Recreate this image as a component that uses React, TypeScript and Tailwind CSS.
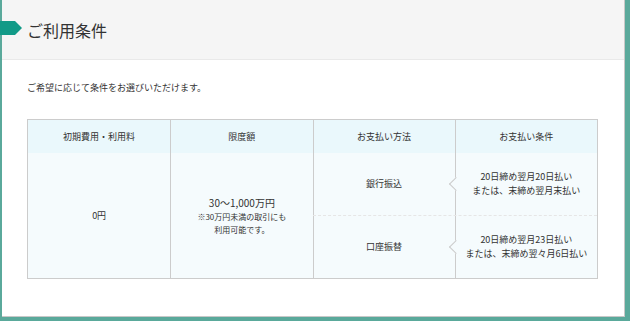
import React from "react";

const font = { fontFamily: '"Noto Sans CJK JP", "Noto Sans", sans-serif' };

function Notch() {
  return (
    <span className="absolute left-[-5px] top-1/2 -mt-[5px] h-[10px] w-[10px] rotate-45 border-b border-l border-[#cccccc] bg-[#f5fbfd]" />
  );
}

export default function App() {
  return (
    <div className="h-[321px] w-[630px] overflow-hidden bg-[#5aa99b] text-[#333333]" style={font}>
      <div className="ml-[2px] mr-[5px] h-[317px] border-b border-r border-[#c8c8c8] bg-white">
        <div className="relative flex h-[60px] items-center border-b border-[#e9e9e9] bg-[#f5f5f5] pl-[25px]">
          <svg className="absolute left-[-2px] top-[21px]" width="22" height="14" viewBox="0 0 22 14">
            <polygon points="0,0 15,0 22,7 15,14 0,14" fill="#119a87" />
          </svg>
          <h1 className="text-[16px] leading-none">ご利用条件</h1>
        </div>

        <p className="mt-[23px] pl-[25px] text-[9px] leading-none">ご希望に応じて条件をお選びいただけます。</p>

        <div className="ml-[25px] mt-[27px] w-[571px] border border-[#cccccc] text-[9px]">
          <div className="grid h-[33px] grid-cols-4 bg-[#eaf8fc]">
            <div className="flex items-center justify-center">初期費用・利用料</div>
            <div className="flex items-center justify-center border-l border-[#cccccc]">限度額</div>
            <div className="flex items-center justify-center border-l border-[#cccccc]">お支払い方法</div>
            <div className="flex items-center justify-center border-l border-[#cccccc]">お支払い条件</div>
          </div>
          <div className="grid h-[125px] grid-cols-4 bg-[#f5fbfd]">
            <div className="flex items-center justify-center">0円</div>
            <div className="flex flex-col items-center justify-center border-l border-[#cccccc] text-center">
              <span className="text-[10px] leading-[14px]">30～1,000万円</span>
              <span className="text-[8px] leading-[13px]">※30万円未満の取引にも<br />利用可能です。</span>
            </div>
            <div className="col-span-2 flex flex-col">
              <div className="grid flex-1 grid-cols-2 border-b border-dashed border-[#e6e6e6]">
                <div className="flex items-center justify-center border-l border-[#cccccc]">銀行振込</div>
                <div className="relative flex flex-col items-center justify-center border-l border-[#cccccc] leading-[14px]">
                  <Notch />
                  <span>20日締め翌月20日払い</span>
                  <span>または、末締め翌月末払い</span>
                </div>
              </div>
              <div className="grid flex-1 grid-cols-2">
                <div className="flex items-center justify-center border-l border-[#cccccc]">口座振替</div>
                <div className="relative flex flex-col items-center justify-center border-l border-[#cccccc] leading-[14px]">
                  <Notch />
                  <span>20日締め翌月23日払い</span>
                  <span>または、末締め翌々月6日払い</span>
                </div>
              </div>
            </div>
          </div>
        </div>
      </div>
    </div>
  );
}
